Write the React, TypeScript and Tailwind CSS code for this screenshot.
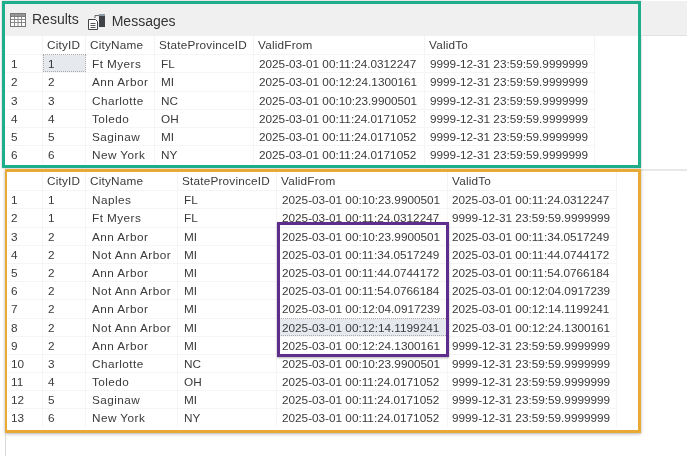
import React from 'react';

const current = [
  ['1', '1', 'Ft Myers', 'FL', '2025-03-01 00:11:24.0312247', '9999-12-31 23:59:59.9999999'],
  ['2', '2', 'Ann Arbor', 'MI', '2025-03-01 00:12:24.1300161', '9999-12-31 23:59:59.9999999'],
  ['3', '3', 'Charlotte', 'NC', '2025-03-01 00:10:23.9900501', '9999-12-31 23:59:59.9999999'],
  ['4', '4', 'Toledo', 'OH', '2025-03-01 00:11:24.0171052', '9999-12-31 23:59:59.9999999'],
  ['5', '5', 'Saginaw', 'MI', '2025-03-01 00:11:24.0171052', '9999-12-31 23:59:59.9999999'],
  ['6', '6', 'New York', 'NY', '2025-03-01 00:11:24.0171052', '9999-12-31 23:59:59.9999999'],
];

const history = [
  ['1', '1', 'Naples', 'FL', '2025-03-01 00:10:23.9900501', '2025-03-01 00:11:24.0312247'],
  ['2', '1', 'Ft Myers', 'FL', '2025-03-01 00:11:24.0312247', '9999-12-31 23:59:59.9999999'],
  ['3', '2', 'Ann Arbor', 'MI', '2025-03-01 00:10:23.9900501', '2025-03-01 00:11:34.0517249'],
  ['4', '2', 'Not Ann Arbor', 'MI', '2025-03-01 00:11:34.0517249', '2025-03-01 00:11:44.0744172'],
  ['5', '2', 'Ann Arbor', 'MI', '2025-03-01 00:11:44.0744172', '2025-03-01 00:11:54.0766184'],
  ['6', '2', 'Not Ann Arbor', 'MI', '2025-03-01 00:11:54.0766184', '2025-03-01 00:12:04.0917239'],
  ['7', '2', 'Ann Arbor', 'MI', '2025-03-01 00:12:04.0917239', '2025-03-01 00:12:14.1199241'],
  ['8', '2', 'Not Ann Arbor', 'MI', '2025-03-01 00:12:14.1199241', '2025-03-01 00:12:24.1300161'],
  ['9', '2', 'Ann Arbor', 'MI', '2025-03-01 00:12:24.1300161', '9999-12-31 23:59:59.9999999'],
  ['10', '3', 'Charlotte', 'NC', '2025-03-01 00:10:23.9900501', '9999-12-31 23:59:59.9999999'],
  ['11', '4', 'Toledo', 'OH', '2025-03-01 00:11:24.0171052', '9999-12-31 23:59:59.9999999'],
  ['12', '5', 'Saginaw', 'MI', '2025-03-01 00:11:24.0171052', '9999-12-31 23:59:59.9999999'],
  ['13', '6', 'New York', 'NY', '2025-03-01 00:11:24.0171052', '9999-12-31 23:59:59.9999999'],
];

const headers = ['', 'CityID', 'CityName', 'StateProvinceID', 'ValidFrom', 'ValidTo'];

function GridIcon() {
  return (
    <svg width="16" height="14" viewBox="0 0 16 14" className="shrink-0">
      <rect x="0.5" y="0.5" width="15" height="13" fill="#fff" stroke="#777" />
      <rect x="0.5" y="0.5" width="15" height="3" fill="#9a9a9a" stroke="#777" />
      <path d="M4.5 1v12M8 1v12M11.5 1v12M1 6.5h14M1 9.5h14" stroke="#888" fill="none" />
    </svg>
  );
}

function MessagesIcon() {
  return (
    <svg width="20" height="18" viewBox="0 0 20 18" className="shrink-0">
      <path d="M1.5 6.5h7l2 2v8h-9z" fill="#fff" stroke="#444" />
      <path d="M3.5 10.5h5M3.5 12.5h5M3.5 14.5h5" stroke="#555" fill="none" />
      <rect x="12" y="1" width="6" height="13" fill="#3f4347" />
      <rect x="12" y="1" width="6" height="2" fill="#8b9aa5" />
      <path d="M8 5V2.5h4" stroke="#666" fill="none" />
    </svg>
  );
}

function Table({
  rows,
  cols,
  pads,
  selected,
}: {
  rows: string[][];
  cols: string;
  pads: string[];
  selected: [number, number];
}) {
  return (
    <div className={`grid ${cols} auto-rows-[18.2px] leading-[17.5px]`}>
      {headers.map((h, i) => (
        <div key={i} className={`border-r border-[#f3f3f3] whitespace-nowrap tracking-[0.2px] ${i === 0 ? 'pl-[6px]' : 'pl-[4px]'}`}>
          {h}
        </div>
      ))}
      {rows.map((row, r) =>
        row.map((cell, c) => (
          <div
            key={c}
            className={`whitespace-nowrap border-t border-r border-[#f5f5f5] ${pads[c]} ${
              selected[0] === r && selected[1] === c ? 'bg-[#e6eaee] outline-1 outline-dotted outline-[#aaa] -outline-offset-1' : ''
            }`}
          >
            {cell}
          </div>
        )),
      )}
    </div>
  );
}

export default function App() {
  return (
    <div className="relative w-[687px] h-[456px] overflow-hidden bg-white text-[11.75px] text-[#3a3a3a] font-['Liberation_Sans',Arial,sans-serif] blur-[0.45px]">
      <div className="flex items-start pt-[1px] pl-[2px]">
        <section className="w-[639px] h-[167px] shrink-0 border-[3px] border-[#1fae8c] shadow-[0_0_2px_rgba(0,0,0,0.3)]">
          <div className="flex items-center h-[32px] bg-[#f0f0f0] pl-[5px] text-[14px] text-[#333]">
            <GridIcon />
            <span className="ml-[6px] -mt-[2px]">Results</span>
            <span className="ml-[8px] mt-[3px]"><MessagesIcon /></span>
            <span className="ml-[5px] mt-[3px]">Messages</span>
          </div>
          <Table
            rows={current}
            cols="grid-cols-[38px_43px_69px_99px_171px_170px]"
            pads={['pl-[6px]', 'pl-[5px]', 'pl-[6px] tracking-[0.45px]', 'pl-[6px]', 'pl-[5px]', 'pl-[5px]']}
            selected={[0, 1]}
          />
        </section>
        <div className="flex-1 h-[35px] bg-[#f0f0f0] border-b border-[#e2e2e2]" />
      </div>

      <div className="flex items-start pl-[5px] mt-[1px]">
        <section className="relative w-[636px] h-[264px] shrink-0 border-[3px] border-l-[2.5px] border-[#e8a935] shadow-[0_1px_3px_rgba(0,0,0,0.3)]">
          <Table
            rows={history}
            cols="grid-cols-[36px_43px_92px_99px_171px_169px]"
            pads={['pl-[4px]', 'pl-[5px]', 'pl-[6px] tracking-[0.45px]', 'pl-[6px]', 'pl-[5px]', 'pl-[4px]']}
            selected={[7, 4]}
          />
          {/* callout over the ValidFrom column */}
          <div className="absolute left-[270px] top-[50px] w-[172px] h-[135px] border-[3px] border-[#5f2d8c] shadow-[0_1px_2px_rgba(0,0,0,0.3)]" />
        </section>
        <div className="flex-1 h-[2px] bg-[#e8e8e8]" />
      </div>

      <div className="absolute left-[5px] top-[433px] h-[23px] w-px bg-[#d8d8d8]" />
    </div>
  );
}
